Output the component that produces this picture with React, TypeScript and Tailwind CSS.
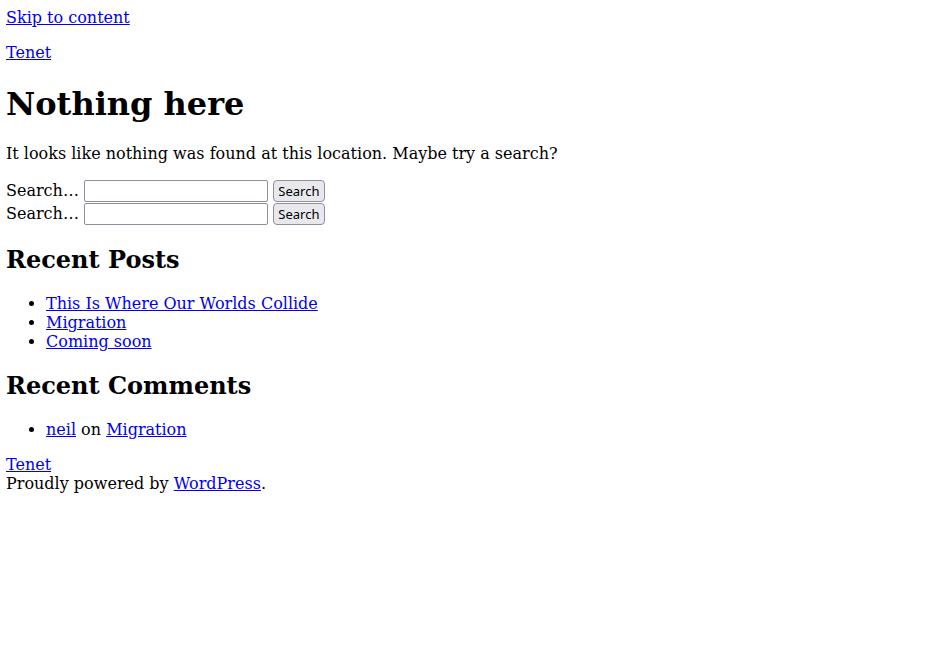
const RECENT_POSTS = ["This Is Where Our Worlds Collide", "Migration", "Coming soon"];

const link = "text-[#0000ee] underline";

const SearchForm = () => {
  return (
    <form className="flex items-center h-[23px]" onSubmit={(e) => e.preventDefault()}>
      <label className="mr-[5px]">Search…</label>
      <input
        type="search"
        className="w-[184px] h-[22px] border border-[#8f8f9d] rounded-[2px] bg-white px-[2px]"
      />
      <button
        type="submit"
        className="ml-[5px] h-[22px] w-[52px] border border-[#8f8f9d] rounded-[4px] bg-[#e9e9ed] text-[13px] font-['Noto_Sans',sans-serif] leading-[normal] text-black"
      >
        Search
      </button>
    </form>
  );
};

const App = () => {
  return (
    <div className="min-h-[667px] bg-white text-black font-['DejaVu_Serif',serif] text-base leading-[normal] pl-[6px] pt-[8px] pr-[8px]">
      <a href="#content" className={`${link} block w-fit`}>
        Skip to content
      </a>
      <p className="mt-[16px]">
        <a href="#" className={link}>
          Tenet
        </a>
      </p>
      <h1 className="text-[32px] font-bold mt-[23px] mb-[21px]">Nothing here</h1>
      <p className="mb-[16px]">
        It looks like nothing was found at this location. Maybe try a search?
      </p>
      <SearchForm />
      <SearchForm />
      <h2 className="text-[24px] font-bold mt-[20px] mb-[20px]">Recent Posts</h2>
      <ul className="list-disc pl-[40px] mb-[16px]">
        {RECENT_POSTS.map((p) => (
          <li key={p}>
            <a href="#" className={link}>
              {p}
            </a>
          </li>
        ))}
      </ul>
      <h2 className="text-[24px] font-bold mt-[20px] mb-[20px]">Recent Comments</h2>
      <ul className="list-disc pl-[40px] mb-[16px]">
        <li>
          <a href="#" className={link}>
            neil
          </a>{" "}
          on{" "}
          <a href="#" className={link}>
            Migration
          </a>
        </li>
      </ul>
      <div>
        <a href="#" className={link}>
          Tenet
        </a>
      </div>
      <div>
        Proudly powered by{" "}
        <a href="#" className={link}>
          WordPress
        </a>
        .
      </div>
    </div>
  );
};

export default App;
